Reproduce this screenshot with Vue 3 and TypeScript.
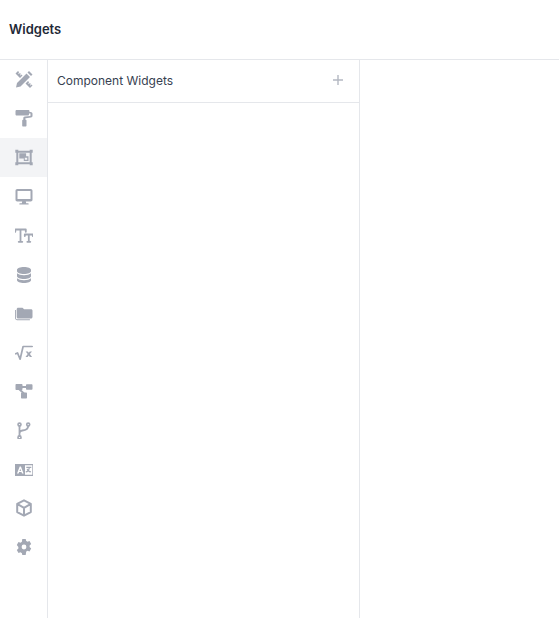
<template>
  <div class="page">
    <header class="topbar">Widgets</header>
    <div class="body">
      <!-- left icon rail -->
      <nav class="rail">
        <button
          v-for="item in railItems"
          :key="item.name"
          class="rail-btn"
          :class="{ 'is-active': item.name === activeItem }"
          :title="item.name"
        >
          <svg :viewBox="`0 ${-(item.shift || 0)} 18 18`" width="18" height="18" class="rail-icon">
            <path v-if="item.fill" :d="item.fill" fill="currentColor" fill-rule="evenodd" />
            <path
              v-if="item.stroke"
              :d="item.stroke"
              fill="none"
              stroke="currentColor"
              :stroke-width="item.width || 1.5"
              stroke-linecap="round"
              stroke-linejoin="round"
            />
          </svg>
        </button>
      </nav>

      <!-- widget list -->
      <section class="panel">
        <div class="panel-head">
          <span class="panel-title">Component Widgets</span>
          <svg class="add" viewBox="0 0 10 10" width="10" height="10">
            <path d="M5 0v10M0 5h10" stroke="currentColor" stroke-width="1.4" fill="none" />
          </svg>
        </div>
      </section>

      <main class="content"></main>
    </div>
  </div>
</template>

<script setup lang="ts">
interface RailItem {
  name: string;
  fill?: string;
  stroke?: string;
  width?: number;
  shift?: number;
}

const activeItem = "Widgets";

const railItems: RailItem[] = [
  {
    name: "Design",
    shift: 0.5,
    fill: "M1 17l1-4.500L11.500 3 15 6.500 5.500 16zM12.500 2L14 .5 17.500 4 16 5.500zM.5 3L3 .5l1.200 1.200-1 1 .7.7 1-1 1 1-1 1 .7.7 1-1L7.500 5 5 7.500zM10.500 13l2.500-2.500 1.200 1.200-1 1 .7.7 1-1 1 1-1 1 .7.7 1-1 .9.900-2.500 2.500z",
  },
  {
    name: "Theme",
    fill: "M1.800 1h11.400c.8 0 1.300.5 1.300 1.300V3h1.200c1 0 1.800.8 1.800 1.700v2.100c0 .9-.6 1.600-1.500 1.700l-5.300.7c-.2 0-.3.1-.3.3v1.200h.4c.4 0 .7.3.7.7v5c0 .6-.4 1-1 1H8.200c-.6 0-1-.4-1-1v-5c0-.4.300-.7.700-.7h.4V9.300c0-.9.600-1.600 1.500-1.700l5.400-.7c.2 0 .3-.1.300-.3V4.900c0-.2-.1-.4-.3-.4h-1.200v.8c0 .8-.5 1.300-1.300 1.300H1.800C1 6.600.5 6.100.5 5.300v-3C.5 1.500 1 1 1.800 1z",
  },
  {
    name: "Widgets",
    shift: 0.5,
    fill: "M.3 1.300h3v1h11.400v-1h3v3h-1v9.400h1v3h-3v-1H3.300v1h-3v-3h1V4.300h-1zM3.300 4.300v9.400h11.400V4.300zM4.300 4.800h6.800v3h2.400v4.700H8.800V10H4.300zM9.800 10v1.200h2.400V9.200h-2.400z",
  },
  {
    name: "Screens",
    shift: 1,
    fill: "M2.200 1h13.600c.9 0 1.700.8 1.700 1.700v9.100c0 .9-.8 1.700-1.700 1.700h-5l.4 1.700h1.900c.4 0 .6.3.6.7s-.2.6-.6.6H4.900c-.4 0-.6-.3-.6-.6s.2-.7.6-.7h1.900l.4-1.700h-5C1.300 13.500.5 12.700.5 11.800V2.700C.5 1.800 1.300 1 2.200 1zM2.500 3v8h13V3z",
  },
  {
    name: "Typography",
    shift: 1,
    stroke: "M.3 4.800V2.500h10.500v2.300M5.500 2.500v12.300M3.700 14.800h3.600M9.800 9V7.500h8V9M13.800 7.500v7.300M12.300 14.800h3",
    width: 1.8,
  },
  {
    name: "Data",
    shift: 1,
    fill: "M9 1c3.900 0 7 1.200 7 2.800v1.400C16 6.800 12.900 8 9 8S2 6.800 2 5.200V3.800C2 2.200 5.100 1 9 1zM2 7.200C3.400 8.500 6 9.200 9 9.200s5.600-.7 7-2v3C16 11.800 12.900 13 9 13s-7-1.200-7-2.800zM2 12.200c1.400 1.300 4 2 7 2s5.600-.7 7-2v2C16 15.800 12.900 17 9 17s-7-1.200-7-2.800z",
  },
  {
    name: "Files",
    shift: 1,
    fill: "M3.200 2.800h4.300l1.600 1.500h6.900c.9 0 1.500.6 1.500 1.400v6.300c0 .9-.7 1.500-1.500 1.500H3.200c-.9 0-1.500-.7-1.500-1.500V4.300c0-.8.600-1.500 1.500-1.500zM0 5h.9v8c0 .7.600 1.300 1.300 1.300h12.700v.9H2.200C1 15.200 0 14.300 0 13.100z",
  },
  {
    name: "Functions",
    shift: 1,
    stroke: "M.7 9.800l1.800-.9 2.600 6.300 3-12.700h9.100",
    width: 1.7,
    fill: "M10.600 7.500h2.200l1 1.300 1-1.300h2.200l-2.100 2.600 2.200 2.900h-2.300l-1-1.400-1.100 1.400h-2.200l2.200-2.900z",
  },
  {
    name: "Flow",
    shift: 1,
    stroke: "M7 4h4.500M4.500 6.500l4 3.500",
    width: 1.8,
    fill: "M1.500 1h5c.6 0 1 .4 1 1v4c0 .6-.4 1-1 1h-5c-.6 0-1-.4-1-1V2c0-.6.4-1 1-1zM12 1.300h4.500c.6 0 1 .4 1 1v3.500c0 .6-.4 1-1 1H12c-.6 0-1-.4-1-1V2.300c0-.6.4-1 1-1zM7 9.500h4c.6 0 1 .4 1 1v4c0 .6-.4 1-1 1H7c-.6 0-1-.4-1-1v-4c0-.6.4-1 1-1z",
  },
  {
    name: "Branches",
    shift: 1,
    stroke: "M4.500 4v10M4.500 11.300c0-1.600 1-2.600 2.900-2.800 3.700-.4 5.800-1.300 5.800-4.500",
    width: 1.8,
    fill: "M4.500.300a2.300 2.300 0 1 1 0 4.600 2.300 2.300 0 0 1 0-4.600zM4.500 1.900a.7.7 0 1 0 0 1.400.7.7 0 0 0 0-1.400zM13.200.300a2.300 2.300 0 1 1 0 4.600 2.300 2.300 0 0 1 0-4.600zM13.200 1.900a.7.7 0 1 0 0 1.400.7.7 0 0 0 0-1.400zM4.500 13.100a2.300 2.300 0 1 1 0 4.600 2.300 2.300 0 0 1 0-4.600zM4.500 14.700a.7.7 0 1 0 0 1.400.7.7 0 0 0 0-1.400z",
  },
  {
    name: "Localization",
    shift: 1,
    fill: "M.5 3h17c.6 0 1 .4 1 1v10c0 .6-.4 1-1 1H.5c-.6 0-1-.4-1-1V4c0-.6.4-1 1-1zM10 4.200v9.600h7.300V4.200zM4.700 5.500L2 12.500h1.600l.5-1.400h2.400l.5 1.400h1.600L5.900 5.500zM5.300 7.800l.8 2.100H4.500zM11.300 5.800h5v1.300h-1.500c-.1.9-.4 1.700-.8 2.300.6.400 1.300.7 2.100.9l-.5 1.300c-.9-.3-1.700-.7-2.400-1.200-.6.500-1.300.9-2.200 1.200l-.5-1.200c.8-.2 1.400-.6 1.900-1-.3-.4-.6-.8-.8-1.300l1.200-.4c.1.300.2.500.4.800.2-.4.300-.9.400-1.400h-2.300z",
  },
  {
    name: "Packages",
    stroke: "M9 1.300l6.800 3.600v8.200L9 16.700l-6.800-3.600V4.900zM2.600 5.200L9 8.900l6.400-3.700M9 8.900v7.400",
    width: 2,
  },
  {
    name: "Settings",
    fill: "M7.300 1h3.400l.5 2.100c.4.200.9.400 1.300.7l2-.7 1.700 3-1.600 1.400c.1.500.1 1 0 1.500l1.600 1.400-1.700 3-2-.7c-.4.300-.9.500-1.300.7L10.700 17H7.300l-.5-2.100c-.4-.2-.9-.4-1.300-.7l-2 .7-1.700-3 1.600-1.400c-.1-.5-.1-1 0-1.500L1.800 7.100l1.700-3 2 .7c.4-.3.900-.5 1.300-.7zM9 6.600a2.400 2.400 0 1 0 0 4.800 2.400 2.400 0 0 0 0-4.800z",
  },
];
</script>

<style>
html,
body {
  margin: 0;
  background: #fff;
}
</style>

<style scoped>
.page {
  height: 618px;
  display: flex;
  flex-direction: column;
  overflow: hidden;
  font-family: Inter, "Liberation Sans", sans-serif;
}

.topbar {
  height: 57px;
  flex-shrink: 0;
  display: flex;
  align-items: center;
  padding: 0 0 2px 9px;
  border-bottom: 1px solid #e5e7eb;
  font-size: 13px;
  font-weight: 600;
  color: #1f2937;
}

.body {
  flex: 1;
  display: flex;
  min-height: 0;
}

.rail {
  width: 47px;
  flex-shrink: 0;
  border-right: 1px solid #e5e7eb;
  display: flex;
  flex-direction: column;
}

.rail-btn {
  height: 39px;
  flex-shrink: 0;
  padding: 0 0 1px;
  border: none;
  background: transparent;
  display: flex;
  align-items: center;
  justify-content: center;
  color: #a3a8b4;
}

.rail-btn.is-active {
  background: #f3f4f6;
}

.panel {
  width: 311px;
  flex-shrink: 0;
  border-right: 1px solid #e5e7eb;
}

.panel-head {
  height: 43px;
  box-sizing: border-box;
  display: flex;
  align-items: center;
  justify-content: space-between;
  padding: 0 16px 2px 9px;
  border-bottom: 1px solid #e5e7eb;
}

.panel-title {
  font-size: 12px;
  color: #374151;
}

.add {
  color: #b4b8c2;
}

.content {
  flex: 1;
}
</style>
